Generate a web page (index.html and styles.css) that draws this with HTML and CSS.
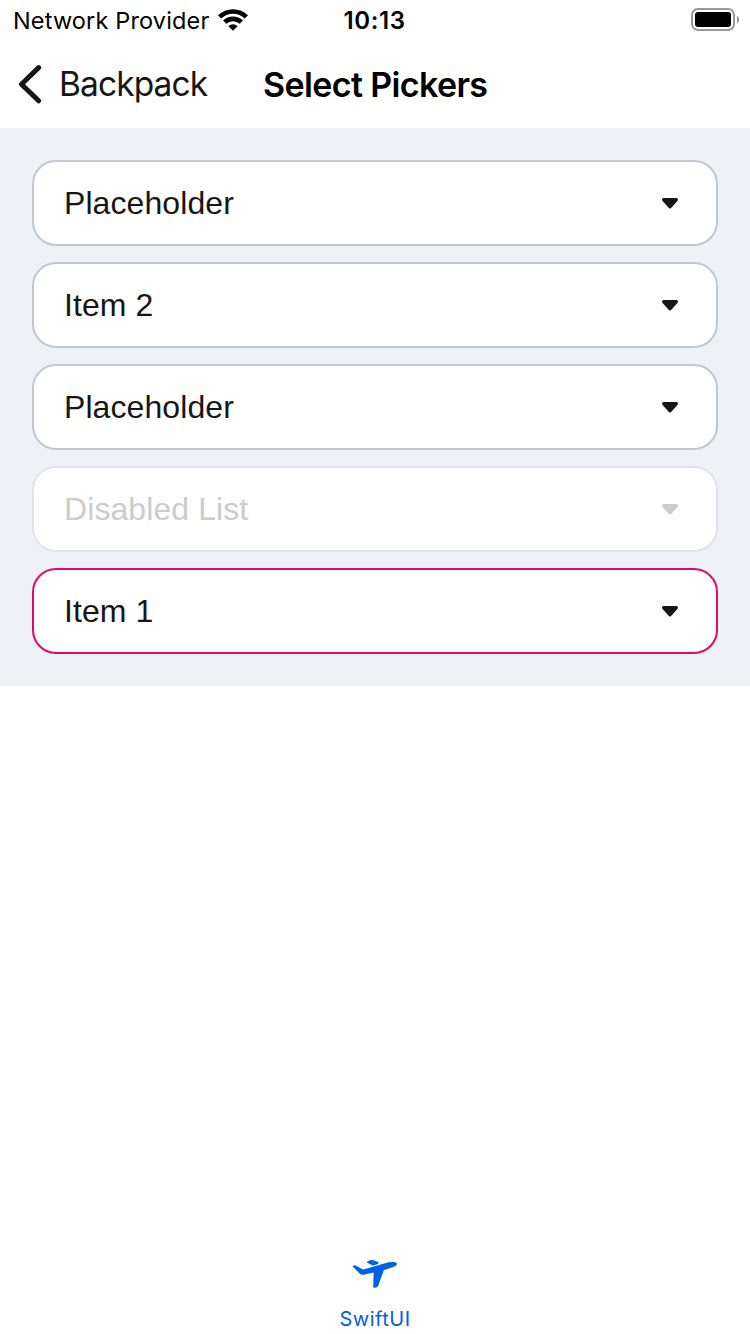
FILE: index.html
```html
<!DOCTYPE html>
<html lang="en">
<head>
<meta charset="utf-8">
<title>Select Pickers</title>
<link rel="stylesheet" href="styles.css">
</head>
<body>
<div class="screen">
  <header class="status">
    <div class="carrier"><span>Network Provider</span>
      <svg class="wifi" width="30" height="22" viewBox="0 0 30 22" fill="none" stroke="#000" stroke-width="4.600"><path d="M1.600 7.800a19.400 19.400 0 0 1 26.800 0"/><path d="M6.700 13.200a12 12 0 0 1 16.600 0"/><path d="M15 21.800l-4.600-4.600a6.600 6.600 0 0 1 9.200 0z" fill="#000" stroke="none"/></svg>
    </div>
    <time class="time">10:13</time>
    <svg class="battery" width="48" height="24" viewBox="0 0 48 24"><rect x="1" y="1" width="42" height="21" rx="6" fill="none" stroke="#999" stroke-width="2"/><rect x="4" y="4" width="36" height="15" rx="3" fill="#000"/><path d="M46 8c2.700 1.200 2.700 6 0 7.200z" fill="#888"/></svg>
  </header>
  <nav class="nav">
    <a class="back"><svg width="24" height="40" viewBox="0 0 24 40"><path d="M20.600 3.600L3.500 20.200L20.600 36.800" fill="none" stroke="#161616" stroke-width="5" stroke-linecap="round" stroke-linejoin="round"/></svg><span>Backpack</span></a>
    <h1 class="title">Select Pickers</h1>
  </nav>
  <main class="pickers">
    <div class="picker"><span>Placeholder</span><svg class="arrow" viewBox="0 0 16 11"><path d="M1.500 0h13q1.500 0 1.500 1.600 0 .8-.6 1.400L9.600 9.600q-1.600 1.700-3.200 0L.6 3Q0 2.400 0 1.600 0 0 1.500 0z"/></svg></div>
    <div class="picker"><span>Item 2</span><svg class="arrow" viewBox="0 0 16 11"><path d="M1.500 0h13q1.500 0 1.500 1.600 0 .8-.6 1.400L9.600 9.600q-1.600 1.700-3.200 0L.6 3Q0 2.400 0 1.600 0 0 1.500 0z"/></svg></div>
    <div class="picker"><span>Placeholder</span><svg class="arrow" viewBox="0 0 16 11"><path d="M1.500 0h13q1.500 0 1.500 1.600 0 .8-.6 1.400L9.600 9.600q-1.600 1.700-3.200 0L.6 3Q0 2.400 0 1.600 0 0 1.500 0z"/></svg></div>
    <div class="picker disabled"><span>Disabled List</span><svg class="arrow" viewBox="0 0 16 11"><path d="M1.500 0h13q1.500 0 1.500 1.600 0 .8-.6 1.400L9.600 9.600q-1.600 1.700-3.200 0L.6 3Q0 2.400 0 1.600 0 0 1.500 0z"/></svg></div>
    <div class="picker error"><span>Item 1</span><svg class="arrow" viewBox="0 0 16 11"><path d="M1.500 0h13q1.500 0 1.500 1.600 0 .8-.6 1.400L9.600 9.600q-1.600 1.700-3.200 0L.6 3Q0 2.400 0 1.600 0 0 1.500 0z"/></svg></div>
  </main>
  <footer class="tabs">
    <svg width="46" height="30" viewBox="0 0 46 30" fill="#0062e3"><path d="M1 6.700Q2.200 5.800 4 6.700L10 10.100Q11 10.600 12.300 10.200L36.500 3.300Q43 2.300 44.800 4.200Q45.700 6.200 42.500 7.500L31.800 11.200L26.300 26.500Q25.300 29 22 28.700Q21 28.600 21.200 27L21.700 13.600L12 15.800Q9.300 16.200 7.300 14.300L1 7.800Q.6 7.200 1 6.700z"/><path d="M15.300 2.700L17.700 1.300Q19 .7 20.600 1.100L26.400 3.100L26.200 5L20.800 6.500L15.200 3.700Q14.600 3.200 15.300 2.700z"/></svg>
    <span>SwiftUI</span>
  </footer>
</div>
</body>
</html>
```
FILE: styles.css
```css
* { box-sizing: border-box; }
body { margin: 0; background: #fff; }
.screen { width: 750px; height: 1334px; display: flex; flex-direction: column; font-family: Inter, sans-serif; color: #000; }
.status { height: 40px; padding: 0 11px 0 13px; display: grid; grid-template-columns: 1fr 64px 1fr; align-items: center; font-size: 23.5px; line-height: 40px; }
.carrier { display: flex; align-items: center; gap: 9px; white-space: nowrap; letter-spacing: 0.15px; }
.carrier span, .time { padding-top: 2px; line-height: 38px; }
.time { margin-left: -3px; font-weight: 600; font-size: 24px; text-align: center; letter-spacing: 0.6px; }
.battery { justify-self: end; }
.nav { height: 88px; padding-left: 18px; display: flex; align-items: center; }
.back { width: 245px; display: flex; align-items: center; gap: 17px; color: #161616; font-size: 33.5px; letter-spacing: -0.9px; }
.title { margin: 0; font-size: 34px; font-weight: 600; letter-spacing: -0.62px; white-space: nowrap; }
.pickers { height: 558px; padding: 32px; display: flex; flex-direction: column; gap: 16px; background: #eef2f7; }
.picker { height: 86px; padding: 0 38px 0 30px; display: flex; align-items: center; justify-content: space-between; background: #fff; border: 2px solid #c1c7cf; border-radius: 24px; color: #161616; font-family: "Liberation Sans", Arial, sans-serif; font-size: 32px; line-height: 40px; letter-spacing: 0.08px; }
.arrow { width: 16px; height: 11px; fill: currentColor; }
.disabled { color: #ccc; border-color: #e0e4e9; }
.error { border-color: #e70866; }
.tabs { margin-top: auto; height: 75px; display: flex; flex-direction: column; align-items: center; color: #0062e3; font-size: 20px; line-height: 24px; letter-spacing: 0.5px; }
.tabs span { margin-top: 18px; }
```
